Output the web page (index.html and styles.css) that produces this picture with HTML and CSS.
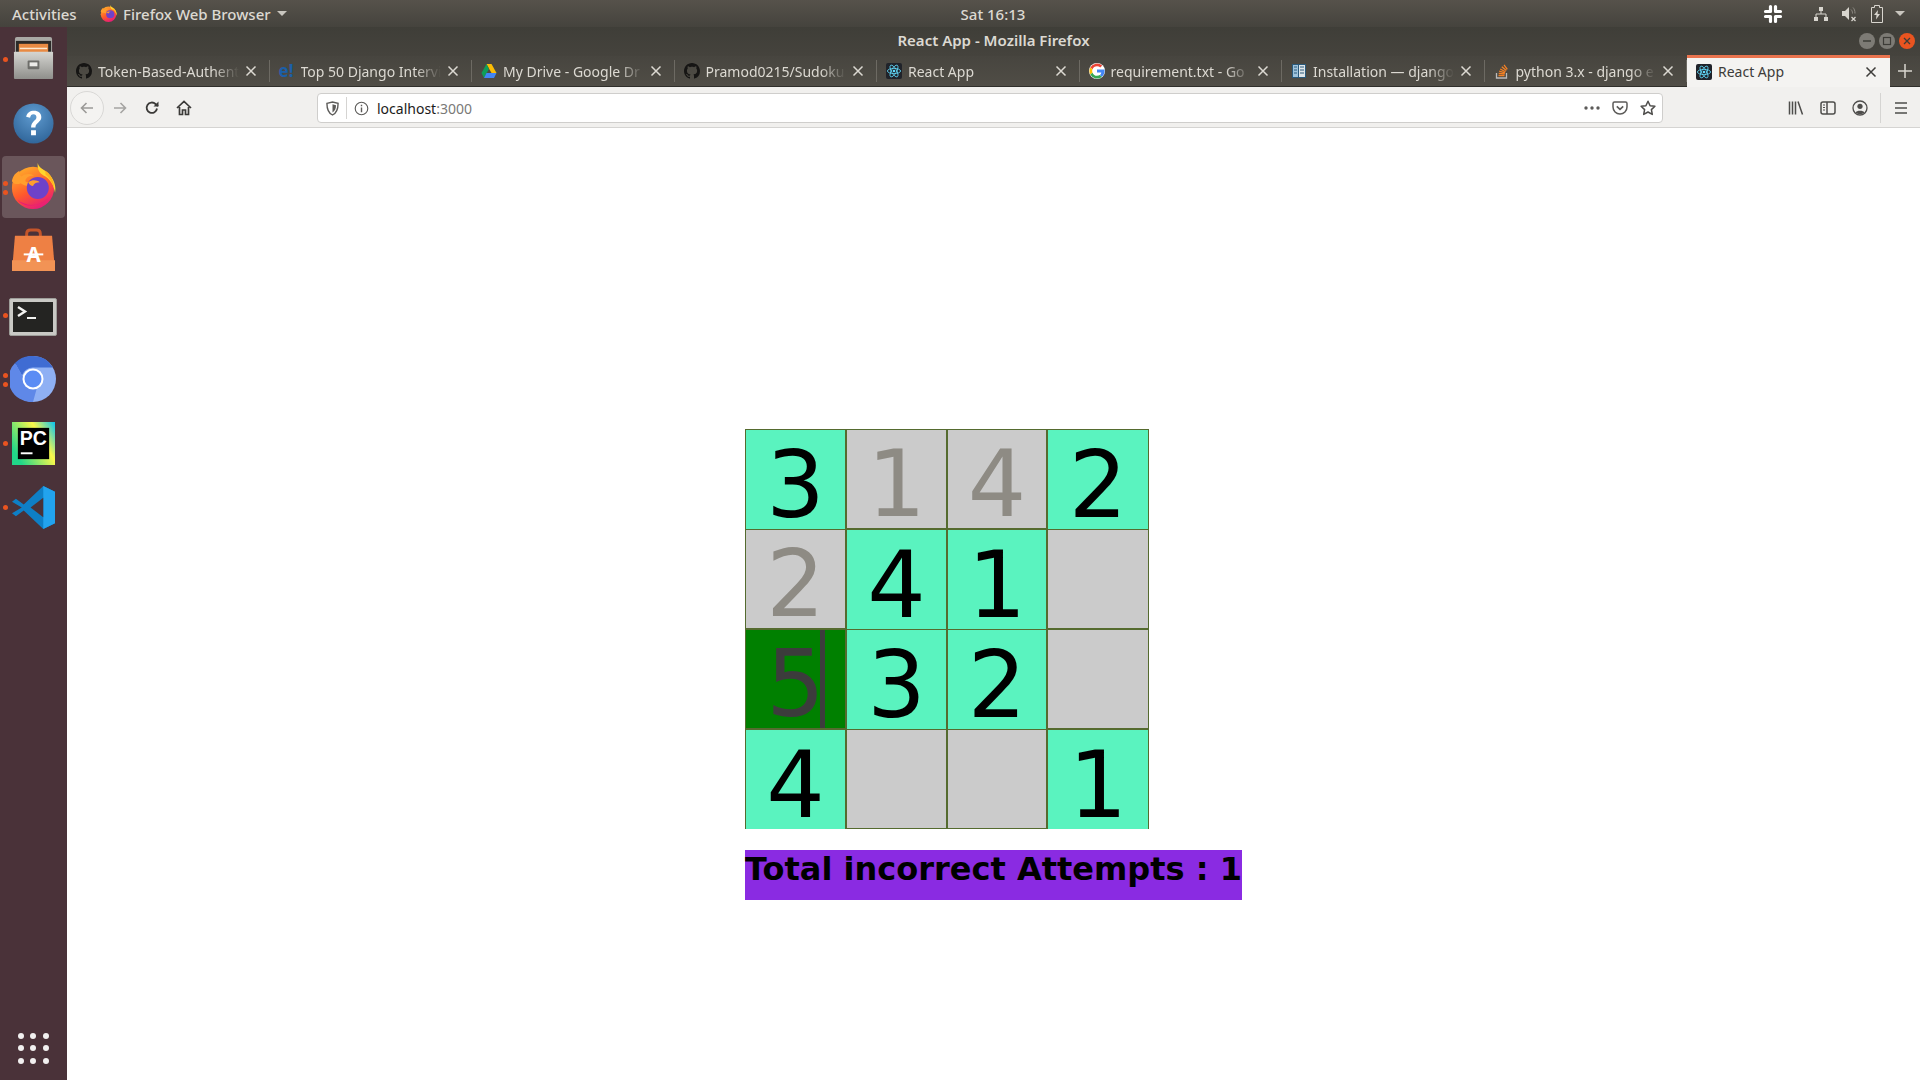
FILE: index.html
```html
<!DOCTYPE html>
<html lang="en">
<head>
    <meta charset="UTF-8">
    <title>React App - Mozilla Firefox</title>
    <link rel="stylesheet" href="styles.css">
</head>
<body>
    <svg class="sprites" width="0" height="0">
        <symbol id="i-github" viewBox="0 0 16 16"><path fill="#161514" d="M8 0C3.58 0 0 3.58 0 8c0 3.54 2.29 6.53 5.47 7.59.4.07.55-.17.55-.38 0-.19-.01-.82-.01-1.49-2.01.37-2.53-.49-2.69-.94-.09-.23-.48-.94-.82-1.13-.28-.15-.68-.52-.01-.53.63-.01 1.08.58 1.23.82.72 1.21 1.87.87 2.33.66.07-.52.28-.87.51-1.07-1.78-.2-3.64-.89-3.64-3.95 0-.87.31-1.59.82-2.15-.08-.2-.36-1.02.08-2.12 0 0 .67-.21 2.2.82.64-.18 1.32-.27 2-.27s1.36.09 2 .27c1.53-1.04 2.2-.82 2.2-.82.44 1.1.16 1.92.08 2.12.51.56.82 1.27.82 2.15 0 3.07-1.87 3.75-3.65 3.95.29.25.54.73.54 1.48 0 1.07-.01 1.93-.01 2.2 0 .21.15.46.55.38A8.01 8.01 0 0 0 16 8c0-4.42-3.58-8-8-8z"/></symbol>
        <symbol id="i-react" viewBox="0 0 16 16"><rect width="16" height="16" rx="2" fill="#20232a"/><g fill="none" stroke="#61dafb" stroke-width=".8"><ellipse cx="8" cy="8" rx="6.6" ry="2.6"/><ellipse cx="8" cy="8" rx="6.6" ry="2.6" transform="rotate(60 8 8)"/><ellipse cx="8" cy="8" rx="6.6" ry="2.6" transform="rotate(120 8 8)"/></g><circle cx="8" cy="8" r="1.3" fill="#61dafb"/></symbol>
        <symbol id="i-close" viewBox="0 0 12 12"><path d="M1.5 1.5l9 9M10.5 1.5l-9 9" fill="none" stroke="currentColor" stroke-width="1.5"/></symbol>
    </svg>

    <header class="topbar">
        <div class="topbar-left">
            <span class="topbar-item">Activities</span>
            <span class="topbar-app">
                <svg class="topbar-ff" viewBox="0 0 48 48"><use href="#i-firefox"/></svg>
                Firefox Web Browser
                <i class="caret-down"></i>
            </span>
        </div>
        <div class="clock">Sat 16:13</div>
        <div class="tray">
            <svg class="tray-slack" viewBox="0 0 20 20" width="20" height="20">
                <g fill="none" stroke="#fff" stroke-width="3.200" stroke-linecap="round"><path d="M7.500 2.500v5M2.500 7.500h5M12.500 2.500v5M12.500 7.500h5M2.500 12.500h5M7.500 12.500v5M12.500 12.500h5M12.500 12.500v5"/></g>
            </svg>
            <svg class="tray-net" viewBox="0 0 16 16" width="16" height="16"><path d="M6 1h4v4H6zM1 11h4v4H1zM11 11h4v4h-4z" fill="#d8d5ce"/><path d="M8 5v3M3 11V8h10v3" fill="none" stroke="#d8d5ce"/></svg>
            <svg class="tray-vol" viewBox="0 0 16 16" width="16" height="16"><path d="M1 5h3l4-4v13l-4-4H1z" fill="#d8d5ce"/><path d="M10 3.500c1 1 1.500 2 1.500 4M12 1.500c1.300 1.500 2 3 2 6" fill="none" stroke="#8f8c85"/><path d="M10.500 11l4 4M14.500 11l-4 4" stroke="#d8d5ce" stroke-width="1.300"/></svg>
            <svg class="tray-bat" viewBox="0 0 14 18" width="14" height="18"><path d="M4.500 .5h5v2h3v15h-11v-15h3z" fill="none" stroke="#d8d5ce"/><path d="M8 5L4 10h2.500L6 14.500 10 9H7.500z" fill="#d8d5ce"/></svg>
            <i class="caret-down"></i>
        </div>
    </header>

    <div class="desktop">
        <nav class="dock">
            <div class="dock-item dock-item-files">
                <i class="pip pip-one"></i>
                <svg class="dock-icon" viewBox="0 0 44 44"><defs><linearGradient id="gDrawer" x1="0" x2="0" y1="0" y2="1"><stop offset="0" stop-color="#d6d6d2"/><stop offset="1" stop-color="#8f8f8b"/></linearGradient></defs><path d="M3 3q0-2 2-2h34q2 0 2 2v40H3z" fill="#a9a9a5"/><rect x="4" y="5" width="36" height="13" fill="#2b2a28"/><rect x="7" y="8" width="30" height="9" fill="#e88a43"/><rect x="8" y="12" width="28" height="1.500" fill="#fbe7cf"/><rect x="2" y="16" width="40" height="28" rx="1" fill="url(#gDrawer)"/><rect x="16" y="25" width="12" height="9" rx="1" fill="#6d6d69"/><rect x="18" y="27" width="8" height="4" fill="#ecebe8"/></svg>
            </div>
            <div class="dock-item">
                <svg class="dock-icon" viewBox="0 0 44 44"><defs><radialGradient id="gHelp" cx=".5" cy=".3" r=".8"><stop offset="0" stop-color="#5f9bd0"/><stop offset="1" stop-color="#2a5f93"/></radialGradient></defs><circle cx="22" cy="22" r="20.500" fill="url(#gHelp)"/><path d="M14.500 15c1-4 4-6 8-6 4.500 0 7.500 2.800 7.500 6.500 0 5-6 5.500-6 10.500h-4.500c0-6.500 5.500-7 5.500-10.500 0-1.800-1.200-3-3-3-2 0-3 1.200-3.500 3.500zM19.500 29h5v5h-5z" fill="#fff"/></svg>
            </div>
            <div class="dock-item dock-item-active">
                <i class="pip pip-two"></i>
                <svg class="dock-icon dock-icon-lg dock-icon-fox" viewBox="0 0 48 48">
                    <defs>
                        <linearGradient id="gFox" x1=".2" x2=".7" y1="0" y2="1"><stop offset="0" stop-color="#ffb029"/><stop offset=".55" stop-color="#ff5a2b"/><stop offset="1" stop-color="#e5167f"/></linearGradient>
                        <g id="i-firefox">
                            <circle cx="24" cy="26" r="22" fill="url(#gFox)"/>
                            <path d="M29 0c1 6 8 7 13 13 5 6 6 13 5 18-1-7-5-15-12-18-4-2-7-7-6-13z" fill="#ffd52e"/>
                            <path d="M37 8c5 3 9 10 9 18-2-6-5-11-9-14z" fill="#ffb21f"/>
                            <path d="M2 19c1-6 4-9 8-11-1 3 0 5 2 6 4-3 9-3 13-1-6 0-9 3-9 6 2 2 6 1 9 3-4 3-10 2-14-1-3 2-7 1-9-2z" fill="#ff9f2e"/>
                            <circle cx="29" cy="26" r="11.500" fill="#6e42c9"/>
                            <path d="M19 20c5-3 9-2 12 0-3 0-6 1-7 4-2 0-4-2-5-4z" fill="#ff9f2e"/>
                            <path d="M8 38c8 8 24 8 32-2-6 9-26 12-32 2z" fill="#e5167f"/>
                        </g>
                    </defs>
                    <use href="#i-firefox"/>
                </svg>
            </div>
            <div class="dock-item dock-item-bag">
                <svg class="dock-icon" viewBox="0 0 44 44"><path d="M15 11V6q0-4 4-4h6q4 0 4 4v5" fill="none" stroke="#c4552a" stroke-width="3"/><path d="M3 8h38l3 36H0z" fill="#ee8044"/><rect y="33" width="44" height="11" fill="#f29355"/><text class="bag-letter" x="22" y="35" text-anchor="middle">A</text><rect x="12" y="26" width="20" height="2" fill="#fff"/></svg>
            </div>
            <div class="dock-item dock-item-term">
                <i class="pip pip-one"></i>
                <svg class="dock-icon dock-icon-term" viewBox="0 0 48 38"><rect x=".5" y=".5" width="47" height="37" rx="1.500" fill="#c9c9c5" stroke="#9d9d99"/><rect x="4" y="4" width="40" height="30" fill="#242422"/><path d="M9 9l7 4.500L9 18" fill="none" stroke="#f2f2f0" stroke-width="2.400"/><rect x="18" y="19" width="9" height="2" fill="#f2f2f0"/></svg>
            </div>
            <div class="dock-item">
                <i class="pip pip-two"></i>
                <svg class="dock-icon dock-icon-lg" viewBox="0 0 46 46"><circle cx="23" cy="23" r="23" fill="#8fb0f4"/><path d="M23 0a23 23 0 0 1 20 11.500H23a11.500 11.500 0 0 0-11 8L5 7a23 23 0 0 1 18-7z" fill="#3f6cd3"/><path d="M5 7l11 19a9 9 0 0 0 11 5.500L23 46A23 23 0 0 1 5 7z" fill="#5f88e8"/><circle cx="23" cy="23" r="10.500" fill="#fff"/><circle cx="23" cy="23" r="8.500" fill="#5b8cf4"/></svg>
            </div>
            <div class="dock-item">
                <i class="pip pip-one"></i>
                <svg class="dock-icon" viewBox="0 0 44 44"><defs><linearGradient id="gPc" x1="0" x2="1" y1=".6" y2="0"><stop offset="0" stop-color="#21d789"/><stop offset=".6" stop-color="#fcf84a"/><stop offset="1" stop-color="#07c3f2"/></linearGradient></defs><rect width="44" height="44" fill="url(#gPc)"/><rect x="6" y="6" width="32" height="32" fill="#000"/><text class="pc-letters" x="8" y="24">PC</text><rect x="9" y="31" width="12" height="2" fill="#fff"/></svg>
            </div>
            <div class="dock-item">
                <i class="pip pip-one"></i>
                <svg class="dock-icon" viewBox="0 0 44 44"><path d="M32 0l12 6v32l-12 6L12 25 4 31l-4-3 10-6L0 16l4-3 8 6z" fill="#0e7fc6"/><path d="M32 0l12 6v32l-12 6z" fill="#22a3ee"/><path d="M32 12L19 22l13 10z" fill="#4a3238"/></svg>
            </div>
            <div class="dock-apps">
                <i></i><i></i><i></i><i></i><i></i><i></i><i></i><i></i><i></i>
            </div>
        </nav>

        <div class="window">
            <div class="titlebar">
                <span class="title">React App - Mozilla Firefox</span>
                <div class="win-controls">
                    <span class="win-btn"><svg viewBox="0 0 16 16"><path d="M4 8h8" stroke="#3d3c37" stroke-width="1.500"/></svg></span>
                    <span class="win-btn"><svg viewBox="0 0 16 16"><rect x="4.500" y="4.500" width="7" height="7" fill="none" stroke="#3d3c37" stroke-width="1.200"/></svg></span>
                    <span class="win-btn win-btn-close"><svg viewBox="0 0 16 16"><path d="M5 5l6 6M11 5l-6 6" stroke="#3d3c37" stroke-width="1.300"/></svg></span>
                </div>
            </div>

            <div class="tabstrip">
                <div class="tab">
                    <svg class="favicon"><use href="#i-github"/></svg>
                    <span class="tab-label">Token-Based-Authent</span>
                    <svg class="tab-close"><use href="#i-close"/></svg>
                </div>
                <div class="tab">
                    <span class="favicon fav-edureka">e!</span>
                    <span class="tab-label">Top 50 Django Intervi</span>
                    <svg class="tab-close"><use href="#i-close"/></svg>
                </div>
                <div class="tab">
                    <svg class="favicon" viewBox="0 0 16 16"><path d="M5.500 1h5l5 9h-5z" fill="#fbbc04"/><path d="M5.500 1L.5 10 3 15l5-9z" fill="#0f9d58"/><path d="M3 15h10l2.500-5h-10z" fill="#4285f4"/></svg>
                    <span class="tab-label">My Drive - Google Dr</span>
                    <svg class="tab-close"><use href="#i-close"/></svg>
                </div>
                <div class="tab">
                    <svg class="favicon"><use href="#i-github"/></svg>
                    <span class="tab-label">Pramod0215/Sudoku</span>
                    <svg class="tab-close"><use href="#i-close"/></svg>
                </div>
                <div class="tab">
                    <svg class="favicon"><use href="#i-react"/></svg>
                    <span class="tab-label">React App</span>
                    <svg class="tab-close"><use href="#i-close"/></svg>
                </div>
                <div class="tab">
                    <svg class="favicon" viewBox="0 0 16 16"><circle cx="8" cy="8" r="8" fill="#fff"/><path d="M8 3.200a4.800 4.800 0 0 1 3.300 1.300l1.900-1.900A7.600 7.600 0 0 0 1.300 4.600l2.200 1.700A4.800 4.800 0 0 1 8 3.200z" fill="#ea4335"/><path d="M3.200 8c0-.6.100-1.200.3-1.700L1.300 4.600a7.600 7.600 0 0 0 0 6.800l2.200-1.700A4.800 4.800 0 0 1 3.200 8z" fill="#fbbc05"/><path d="M8 12.800a4.800 4.800 0 0 1-4.500-3.100l-2.200 1.700A7.600 7.600 0 0 0 13 13.700l-2.100-1.600c-.8.400-1.800.7-2.900.7z" fill="#34a853"/><path d="M15.400 6.600H8v3h4.300a3.700 3.700 0 0 1-1.400 2.500l2.100 1.600c1.500-1.400 2.600-3.500 2.600-6 0-.4-.1-.8-.2-1.100z" fill="#4285f4"/></svg>
                    <span class="tab-label">requirement.txt - Go</span>
                    <svg class="tab-close"><use href="#i-close"/></svg>
                </div>
                <div class="tab">
                    <svg class="favicon" viewBox="0 0 16 16"><rect x="1" y="1" width="14" height="14" fill="#2a5a7c"/><rect x="2" y="2" width="5" height="12" fill="#9fc3dc"/><rect x="8" y="2" width="6" height="12" fill="#dfe6ea"/><path d="M3 4h3M3 7h3M3 10h3M9 4h4M9 7h4M9 10h4" stroke="#2a5a7c"/></svg>
                    <span class="tab-label">Installation — django</span>
                    <svg class="tab-close"><use href="#i-close"/></svg>
                </div>
                <div class="tab">
                    <svg class="favicon" viewBox="0 0 16 16"><path d="M2.500 10v5h10v-5" fill="none" stroke="#bcbbbb" stroke-width="1.300"/><path d="M4.500 12.500h6M4.700 10.300l6 .5M5.200 8.200l5.800 1.600M6.200 6l5.300 2.800M7.800 3.800l4.500 3.800M10 1.800l3.300 4.500" stroke="#f48024" stroke-width="1.300"/></svg>
                    <span class="tab-label">python 3.x - django e</span>
                    <svg class="tab-close"><use href="#i-close"/></svg>
                </div>
                <div class="tab tab-active">
                    <svg class="favicon"><use href="#i-react"/></svg>
                    <span class="tab-label">React App</span>
                    <svg class="tab-close"><use href="#i-close"/></svg>
                </div>
                <svg class="tab-new" viewBox="0 0 14 14"><path d="M7 0v14M0 7h14" stroke="#d8d5ce" stroke-width="1.500"/></svg>
            </div>

            <div class="navbar">
                <span class="nav-back"><svg viewBox="0 0 16 16"><path d="M14 8H2.500M7.500 3L2.500 8l5 5" fill="none" stroke="#9b9a98" stroke-width="1.600"/></svg></span>
                <svg class="nav-icon nav-forward" viewBox="0 0 16 16"><path d="M2 8h11.500M8.500 3l5 5-5 5" fill="none" stroke="#a5a4a2" stroke-width="1.600"/></svg>
                <svg class="nav-icon nav-reload" viewBox="0 0 16 16"><path d="M13 8.500A5.200 5.200 0 1 1 11.500 4L14 6" fill="none" stroke="#3b3a38" stroke-width="1.800"/><path d="M14.500 1.500v5h-5z" fill="#3b3a38"/></svg>
                <svg class="nav-icon nav-home" viewBox="0 0 16 16"><path d="M1 8l7-6.500L15 8M3.500 7v7.500h3V10h3v4.500h3V7" fill="none" stroke="#3b3a38" stroke-width="1.700"/></svg>

                <div class="urlbar">
                    <svg class="url-shield" viewBox="0 0 14 16"><path d="M1 2.500L7 1l6 1.500c0 6-1 10-6 12.500C2 12.500 1 8.500 1 2.500z" fill="none" stroke="#5c5b59" stroke-width="1.500"/><path d="M7 3.500l3.800 1c0 3.500-1 6-3.800 7.800z" fill="#5c5b59"/></svg>
                    <i class="url-sep"></i>
                    <svg class="url-info" viewBox="0 0 16 16"><circle cx="8" cy="8" r="6.700" fill="none" stroke="#5c5b59" stroke-width="1.200"/><path d="M8 7v5M8 4v1.600" stroke="#5c5b59" stroke-width="1.500"/></svg>
                    <span class="url-text">localhost<span class="url-port">:3000</span></span>
                    <span class="url-actions">
                        <svg class="url-dots" viewBox="0 0 16 4"><circle cx="2" cy="2" r="1.700"/><circle cx="8" cy="2" r="1.700"/><circle cx="14" cy="2" r="1.700"/></svg>
                        <svg class="url-pocket" viewBox="0 0 16 16"><path d="M1 3.500q0-1.500 1.500-1.500h11Q15 2 15 3.500V7a7 7 0 0 1-14 0z" fill="none" stroke="#5c5b59" stroke-width="1.500"/><path d="M4.800 6.300L8 9.300l3.200-3" fill="none" stroke="#5c5b59" stroke-width="1.700"/></svg>
                        <svg class="url-star" viewBox="0 0 16 16"><path d="M8 1.300l2.100 4.400 4.800.6-3.500 3.300.9 4.800L8 12l-4.300 2.400.9-4.800L1.100 6.300l4.800-.6z" fill="none" stroke="#4e4d4b" stroke-width="1.500" stroke-linejoin="round"/></svg>
                    </span>
                </div>

                <div class="nav-tools">
                    <svg class="nav-icon" viewBox="0 0 16 16"><path d="M1.500 1.500v13M4.500 1.500v13M7.500 1.500v13M10 1.500l4.500 13" fill="none" stroke="#4e4d4b" stroke-width="1.500"/></svg>
                    <svg class="nav-icon" viewBox="0 0 16 16"><rect x="1" y="2" width="14" height="12" rx="2" fill="none" stroke="#4e4d4b" stroke-width="1.500"/><path d="M7 2v12" stroke="#4e4d4b" stroke-width="1.500"/><path d="M3 5h2M3 7.500h2M3 10h2" stroke="#4e4d4b"/></svg>
                    <svg class="nav-icon" viewBox="0 0 16 16"><circle cx="8" cy="8" r="7" fill="none" stroke="#4e4d4b" stroke-width="1.300"/><circle cx="8" cy="6.300" r="2.600" fill="#4e4d4b"/><path d="M3.500 12.500c1-2.500 8-2.500 9 0-2 2-7 2-9 0z" fill="#4e4d4b"/></svg>
                    <i class="nav-sep"></i>
                    <svg class="nav-icon" viewBox="0 0 16 16"><path d="M2 3h12M2 8h12M2 13h12" stroke="#4e4d4b" stroke-width="1.700"/></svg>
                </div>
            </div>

            <main class="page">
                <div class="game">
                    <div class="board">
                        <div class="cell cell-fixed">3</div>
                        <div class="cell cell-empty">1</div>
                        <div class="cell cell-empty">4</div>
                        <div class="cell cell-fixed">2</div>

                        <div class="cell cell-empty">2</div>
                        <div class="cell cell-fixed">4</div>
                        <div class="cell cell-fixed">1</div>
                        <div class="cell cell-empty"></div>

                        <div class="cell cell-wrong">5<i class="cell-caret"></i></div>
                        <div class="cell cell-fixed">3</div>
                        <div class="cell cell-fixed">2</div>
                        <div class="cell cell-empty"></div>

                        <div class="cell cell-fixed">4</div>
                        <div class="cell cell-empty"></div>
                        <div class="cell cell-empty"></div>
                        <div class="cell cell-fixed">1</div>
                    </div>
                    <h2 class="attempts">Total incorrect Attempts : 1</h2>
                </div>
            </main>
        </div>
    </div>
</body>
</html>
```

FILE: styles.css
```css
*{
    padding: 0;
    margin: 0;
    box-sizing: border-box;
}
body{
    width: 1920px;
    height: 1080px;
    overflow: hidden;
    display: flex;
    flex-direction: column;
    font-family: "Noto Sans", "Open Sans", sans-serif;
    background: #fff;
}
.sprites{
    position: absolute;
}
i{
    display: block;
}

/* top bar */
.topbar{
    height: 27px;
    display: grid;
    grid-template-columns: 940px 106px 1fr;
    align-items: center;
    background: linear-gradient(#56524b, #45433d);
    color: #dcd9d2;
    font-size: 15px;
    font-weight: 500;
}
.topbar-left{
    display: flex;
    align-items: center;
    padding-left: 12px;
}
.topbar-item{
    width: 88px;
}
.topbar-app{
    display: flex;
    align-items: center;
    gap: 6px;
}
.topbar-ff{
    width: 17px;
    height: 17px;
}
.clock{
    text-align: center;
}
.caret-down{
    width: 0;
    height: 0;
    border-left: 5px solid transparent;
    border-right: 5px solid transparent;
    border-top: 5px solid #c9c6bf;
}
.tray{
    display: flex;
    align-items: center;
    padding-left: 717px;
}
.tray-slack{
    margin-right: 30px;
}
.tray-net{
    margin-right: 12px;
}
.tray-vol{
    margin-right: 13px;
}
.tray-bat{
    margin-right: 11px;
}

/* dock */
.desktop{
    flex: 1;
    display: flex;
    min-height: 0;
}
.dock{
    width: 67px;
    flex: none;
    display: flex;
    flex-direction: column;
    background: #4a3239;
}
.dock-item{
    position: relative;
    height: 64px;
    display: flex;
    align-items: center;
    justify-content: center;
    flex: none;
    padding-right: 1px;
}
.dock-item-active::before{
    content: "";
    position: absolute;
    inset: 1px 2px 1px 2px;
    border-radius: 4px;
    background: #6a565b;
}
.dock-icon{
    position: relative;
    width: 43px;
    height: 43px;
}
.dock-icon-lg{
    width: 46px;
    height: 46px;
}
.dock-icon-term{
    width: 48px;
    height: 38px;
}
.dock-item-files .dock-icon,
.dock-item-bag .dock-icon{
    margin-top: -4px;
}
.dock-icon-fox{
    margin-top: -3px;
}
.dock-item-term .dock-icon{
    margin-top: 4px;
}
.pip{
    position: absolute;
    left: 3px;
    z-index: 1;
    width: 5px;
    height: 5px;
    border-radius: 50%;
    background: #e95420;
}
.pip-one{
    top: 30px;
}
.pip-two{
    top: 26px;
    box-shadow: 0 9px 0 #e95420;
}
.bag-letter{
    font: bold 21px "Noto Sans", sans-serif;
    fill: #fff;
}
.pc-letters{
    font: bold 20px "Liberation Sans", sans-serif;
    fill: #fff;
}
.dock-apps{
    margin-top: auto;
    height: 64px;
    display: grid;
    grid-template-columns: repeat(3, 6px);
    grid-auto-rows: 6px;
    gap: 6.500px;
    align-content: center;
    justify-content: center;
    padding-right: 1px;
}
.dock-apps i{
    border-radius: 50%;
    background: #f2f0f0;
}

/* firefox window */
.window{
    flex: 1;
    display: flex;
    flex-direction: column;
    min-width: 0;
}
.titlebar{
    position: relative;
    height: 29px;
    display: flex;
    align-items: center;
    justify-content: center;
    background: linear-gradient(#3f3e38, #45433d);
    color: #dcd9d2;
    font-size: 15px;
    font-weight: 600;
    padding-bottom: 3px;
}
.win-controls{
    position: absolute;
    right: 5px;
    top: 6px;
    display: flex;
    gap: 4px;
}
.win-btn{
    width: 16px;
    height: 16px;
    border-radius: 50%;
    background: #7d7b75;
}
.win-btn svg{
    display: block;
}
.win-btn-close{
    background: #e95420;
}
.tabstrip{
    height: 31px;
    display: flex;
    align-items: stretch;
    background: linear-gradient(#47453f, #504d46);
    border-bottom: 1px solid #2f2e2a;
}
.tab{
    position: relative;
    width: 202.500px;
    flex: none;
    display: flex;
    align-items: center;
    padding: 0 13px 0 9px;
    color: #dcd9d2;
    font-size: 14px;
}
.tab::after{
    content: "";
    position: absolute;
    right: 0;
    top: 4px;
    bottom: 4px;
    width: 1px;
    background: #6d6a63;
}
.favicon{
    width: 16px;
    height: 16px;
    flex: none;
    margin-right: 6px;
}
.fav-edureka{
    color: #1c5fa8;
    font-weight: 700;
    font-size: 17px;
    line-height: 16px;
}
.tab-label{
    flex: 1;
    min-width: 0;
    white-space: nowrap;
    overflow: hidden;
    mask-image: linear-gradient(to right, #000 82%, transparent 100%);
}
.tab-close{
    width: 12px;
    height: 12px;
    flex: none;
    margin-left: 6px;
}
.tab-active{
    margin-top: -1px;
    margin-bottom: -1px;
    padding-bottom: 2px;
    background: #f4f3f1;
    border-top: 3px solid #e9734e;
    color: #3d3c3a;
}
.tab-active .tab-label{
    mask-image: none;
}
.tab-active::after{
    display: none;
}
.tab-new{
    width: 14px;
    height: 14px;
    align-self: center;
    margin-left: 8px;
}

/* nav bar */
.navbar{
    height: 41px;
    display: flex;
    align-items: center;
    background: #f1f0ee;
    border-bottom: 1px solid #d5d4d2;
    padding: 2px 0 0 3px;
}
.nav-back{
    width: 34px;
    height: 34px;
    display: flex;
    align-items: center;
    justify-content: center;
    border: 1px solid #d9d8d6;
    border-radius: 50%;
    background: #f4f3f1;
}
.nav-back svg{
    width: 16px;
    height: 16px;
}
.nav-icon{
    width: 16px;
    height: 16px;
    flex: none;
}
.nav-forward{
    margin-left: 8px;
}
.nav-reload{
    margin-left: 16px;
}
.nav-home{
    margin-left: 16px;
}
.urlbar{
    width: 1346px;
    height: 30px;
    margin-left: 125px;
    display: flex;
    align-items: center;
    background: #fff;
    border: 1px solid #cfcecc;
    border-radius: 4px;
    padding-left: 8px;
    font-size: 14px;
}
.url-shield{
    width: 13px;
    height: 15px;
    flex: none;
}
.url-sep{
    width: 1px;
    height: 22px;
    margin: 0 7px 0 7px;
    background: #d5d4d2;
}
.url-info{
    width: 15px;
    height: 15px;
    flex: none;
    margin-right: 8px;
}
.url-text{
    color: #1c1b1a;
}
.url-port{
    color: #7a7977;
}
.url-actions{
    margin-left: auto;
    display: flex;
    align-items: center;
    padding-right: 6px;
}
.url-dots{
    width: 16px;
    height: 4px;
    fill: #5c5b59;
    margin-right: 12px;
}
.url-pocket{
    width: 16px;
    height: 16px;
    margin-right: 12px;
}
.url-star{
    width: 16px;
    height: 16px;
}
.nav-tools{
    display: flex;
    align-items: center;
    gap: 16px;
    margin-left: 125px;
}
.nav-sep{
    width: 1px;
    height: 30px;
    margin: 0 -4px;
    background: #d5d4d2;
}

/* page */
.page{
    flex: 1;
    background: #fff;
    padding-top: 301px;
}
.game{
    width: 497px;
    margin: 0 auto;
}
.board{
    display: grid;
    grid-template-columns: 101px 101px 100px 102px;
    grid-auto-rows: 100px;
    width: 404px;
    font-family: "DejaVu Sans", sans-serif;
    font-size: 92px;
}
.cell{
    position: relative;
    display: flex;
    align-items: center;
    justify-content: center;
    border: 1px solid #556b2f;
    padding-top: 12px;
    line-height: 84px;
}
.cell-fixed{
    background: #5af3bf;
    border-bottom: none;
    color: #000;
}
.cell-empty{
    background: #cbcbcb;
    color: #8e8b84;
}
.cell-wrong{
    background: #008000;
    color: #3c3c3c;
}
.cell-caret{
    position: absolute;
    top: 0;
    bottom: 0;
    left: 74px;
    width: 5px;
    background: #3c3c3c;
}
.attempts{
    height: 50px;
    margin-top: 21px;
    background: #8a2be2;
    color: #000;
    font-family: "DejaVu Sans", sans-serif;
    font-size: 32px;
    font-weight: bold;
    line-height: 38px;
    white-space: nowrap;
}
```
